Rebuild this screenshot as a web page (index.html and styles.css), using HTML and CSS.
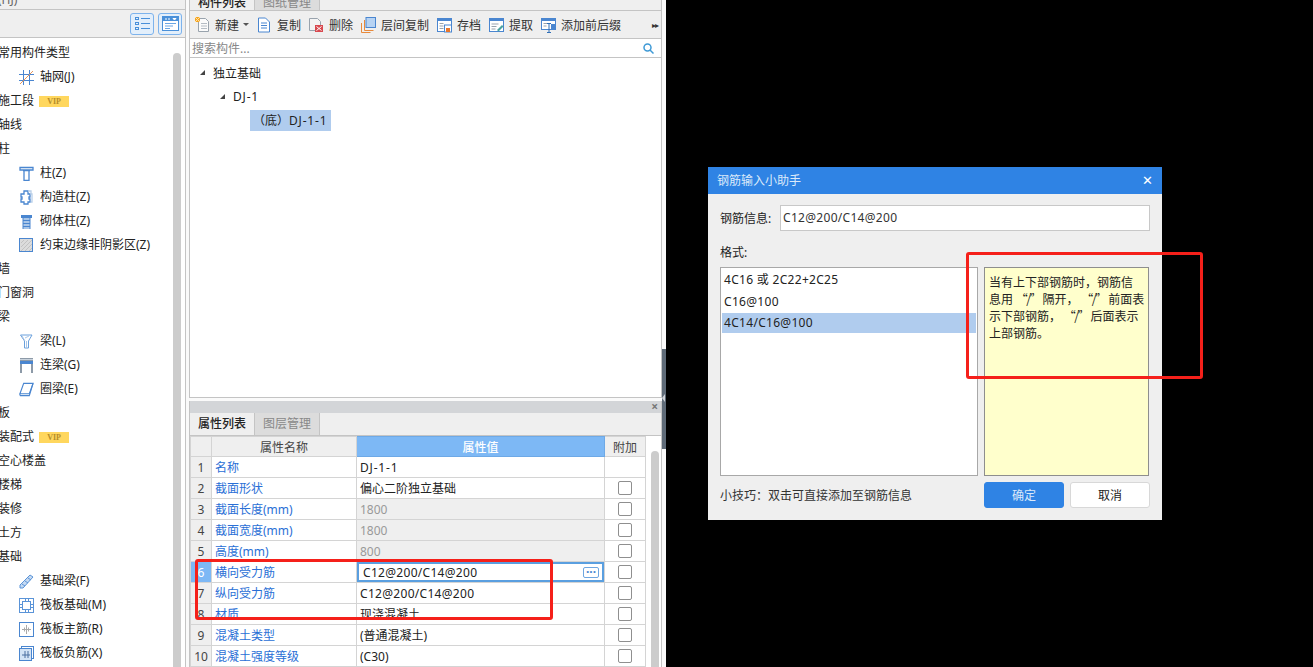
FILE: index.html
```html
<!DOCTYPE html>
<html lang="zh-CN">
<head>
    <meta charset="UTF-8">
    <title>钢筋输入小助手</title>
    <link rel="stylesheet" href="styles.css">
</head>
<body>
    <div class="app">
        <div class="sidebar">
            <div class="side-top">导航(HJ)</div>
            <div class="side-tools">
                <button class="tool-btn">
                    <svg width="17" height="15" viewBox="0 0 17 15" fill="none" stroke="#4a90d9"><rect x="1.5" y="1.5" width="3" height="2"/><rect x="1.5" y="6.5" width="3" height="2"/><rect x="1.5" y="11.5" width="3" height="2"/><path d="M7 2.5h9M7 7.5h9M7 12.5h9"/></svg>
                </button>
                <button class="tool-btn">
                    <svg width="17" height="15" viewBox="0 0 17 15"><rect x="0.5" y="0.5" width="16" height="14" fill="#fff" stroke="#4a90d9"/><rect x="1" y="1" width="15" height="4" fill="#4a90d9"/><path d="M3 3h2M6 3h2M11 2.5h3l-1.5 1.5z" stroke="#fff" fill="#fff"/><path d="M3 7.5h11M3 10h8M3 12.5h5" stroke="#6aa5e3"/></svg>
                </button>
            </div>
            <div class="side-body">
                <div class="side-list">
                    <div class="group">常用构件类型</div>
                    <div class="item"><svg class="icon" viewBox="0 0 15 15" fill="none" stroke="#4a86d0"><path d="M0 4.5h15M0 10.5h15M4.5 0v15M10.5 0v15"/><path d="M1 14L14 1" stroke="#e8965a"/></svg>轴网(J)</div>
                    <div class="group">施工段<span class="vip">VIP</span></div>
                    <div class="group">轴线</div>
                    <div class="group">柱</div>
                    <div class="item"><svg class="icon" viewBox="0 0 15 15" fill="none" stroke="#4a86d0"><path d="M1 1.5h13v2.500h-13zM4 4.500h7M5 4.500v10h5v-10" stroke-width="1.300"/></svg>柱(Z)</div>
                    <div class="item"><svg class="icon" viewBox="0 0 15 15" fill="none" stroke="#4a86d0" stroke-width="1.300"><path d="M5 1h4v3h2v3h-1v2h1v3h-2v2h-4v-2h-3v-3h1v-2h-1v-3h3z"/><path d="M9 1h3v3h1v8h-1" stroke="#b9cfe9"/></svg>构造柱(Z)</div>
                    <div class="item"><svg class="icon" viewBox="0 0 15 15"><rect x="2" y="1" width="11" height="3" fill="#4a86d0"/><rect x="4" y="4" width="7" height="11" fill="#a9c6e8"/><path d="M4 6.500h7M4 9.500h7M4 12.500h7M4 4v11M11 4v11" stroke="#4a86d0" fill="none"/></svg>砌体柱(Z)</div>
                    <div class="item"><svg class="icon" viewBox="0 0 15 15"><rect x="0.500" y="0.500" width="13" height="13" fill="#dcdcdc" stroke="#4a86d0"/><path d="M2 5L5 2M2 9L9 2M2 13L13 2M6 13L13 6M10 13L13 10" stroke="#c2c2c2"/></svg>约束边缘非阴影区(Z)</div>
                    <div class="group">墙</div>
                    <div class="group">门窗洞</div>
                    <div class="group">梁</div>
                    <div class="item"><svg class="icon" viewBox="0 0 15 15" fill="none" stroke="#6aa0dc"><path d="M1.500 1h11.500l-3.500 6v7h-4v-7z"/><path d="M3 2l3 5M7.500 7v7M6 4l4-2" stroke="#a9c6e8"/></svg>梁(L)</div>
                    <div class="item"><svg class="icon" viewBox="0 0 15 15"><rect x="1" y="0" width="13" height="15" fill="#8d9aa8"/><rect x="1" y="3" width="13" height="3" fill="#4a86d0"/><rect x="3" y="6" width="9" height="9" fill="#fff"/><rect x="1" y="1" width="13" height="1" fill="#c9d3dd"/></svg>连梁(G)</div>
                    <div class="item"><svg class="icon" viewBox="0 0 16 15" fill="none" stroke="#4a86d0" stroke-width="1.200"><path d="M5 1h10l-4 11h-10z"/><path d="M1 14h10l4-13M1 12v2" /></svg>圈梁(E)</div>
                    <div class="group">板</div>
                    <div class="group">装配式<span class="vip">VIP</span></div>
                    <div class="group">空心楼盖</div>
                    <div class="group">楼梯</div>
                    <div class="group">装修</div>
                    <div class="group">土方</div>
                    <div class="group">基础</div>
                    <div class="item"><svg class="icon" viewBox="0 0 15 15"><path d="M1 11L11 1l3 2L4 14H1z" fill="#c6daf2" stroke="#5a94d8"/><path d="M3 10l3 2M6 7l3 2M9 4l3 2" stroke="#5a94d8"/></svg>基础梁(F)</div>
                    <div class="item"><svg class="icon" viewBox="0 0 15 15" fill="none" stroke="#5a94d8"><rect x="0.500" y="0.500" width="14" height="14"/><rect x="3.500" y="3.500" width="8" height="8"/><path d="M1 6.500h2M1 9.500h2M12 6.500h2M12 9.500h2M6.500 1v2M9.500 1v2M6.500 12v2M9.500 12v2"/></svg>筏板基础(M)</div>
                    <div class="item"><svg class="icon" viewBox="0 0 15 15" fill="none"><rect x="0.500" y="0.500" width="14" height="14" stroke="#4a86d0"/><path d="M3 7.500h9M7.500 3v9M5.500 5.500v4M9.500 5.500v4" stroke="#aaa"/></svg>筏板主筋(R)</div>
                    <div class="item"><svg class="icon" viewBox="0 0 15 15"><rect x="2.500" y="0.500" width="12" height="12" fill="#fff" stroke="#4a86d0"/><rect x="0.500" y="2.500" width="12" height="12" fill="#d3e3f6" stroke="#4a86d0"/><path d="M3 9h8M6 5v7M9 5v7" stroke="#4a6fa0" fill="none"/></svg>筏板负筋(X)</div>
                </div>
                <div class="scroll side-scroll"></div>
            </div>
        </div>

        <div class="mid">
            <div class="panel-top">
                <div class="tabs tabs-cut">
                    <div class="tab active">构件列表</div>
                    <div class="tab">图纸管理</div>
                </div>
                <div class="toolbar">
                    <div class="tb-item"><svg class="icon" viewBox="0 0 15 16"><path d="M3.500 1.500h7l3 3v10h-10z" fill="#fbfbfb" stroke="#99a3ad"/><path d="M6 6.500h6M6 9h6M6 11.500h6" stroke="#b5bcc4"/><rect x="0" y="0" width="5" height="5" fill="#f5a623"/><path d="M0 0l5 5M5 0l-5 5" stroke="#fde2ad"/></svg>新建<span class="caret"></span></div>
                    <div class="tb-item"><svg class="icon" viewBox="0 0 15 16" fill="none" stroke="#4a86d0"><path d="M1.500 1h7l4 4v10h-11z" fill="#fff"/><path d="M4 6h6M4 8.500h6M4 11h6"/></svg>复制</div>
                    <div class="tb-item"><svg class="icon" viewBox="0 0 15 16"><path d="M0.500 1.500h8l3 3v9h-11z" fill="#f4f4f4" stroke="#99a3ad"/><rect x="6" y="8" width="8" height="7" fill="#d8494f"/><path d="M7.500 9.500l5 4M12.500 9.500l-5 4" stroke="#fff"/></svg>删除</div>
                    <div class="tb-item"><svg class="icon" viewBox="0 0 15 16"><rect x="5" y="0.500" width="9.500" height="10" fill="#b7d3f3" stroke="#4a86d0"/><path d="M3.500 3v10.500h9M0.500 6v9.500h9" fill="none" stroke="#e88a3c"/></svg>层间复制</div>
                    <div class="tb-item"><svg class="icon" viewBox="0 0 15 16"><rect x="0.500" y="1.500" width="14" height="13" fill="#fff" stroke="#4a86d0"/><rect x="0" y="1" width="15" height="3" fill="#4a86d0"/><path d="M2.500 6.500h4M2.500 9h4M2.500 11.500h4" stroke="#99a3ad"/><rect x="7.500" y="8" width="7" height="7" fill="#fff" stroke="#4a86d0"/><rect x="9" y="11" width="4" height="4" fill="#e8762c"/></svg>存档</div>
                    <div class="tb-item"><svg class="icon" viewBox="0 0 15 16"><rect x="0.500" y="1.500" width="14" height="13" fill="#fff" stroke="#4a86d0"/><rect x="0" y="1" width="15" height="3" fill="#4a86d0"/><path d="M2.500 7h7M2.500 9.500h5M2.500 12h4" stroke="#99a3ad"/><path d="M8 13l5-5 1.500 1.500-5 5z" fill="#4aa3a0"/></svg>提取</div>
                    <div class="tb-item"><svg class="icon" viewBox="0 0 15 16"><rect x="0.500" y="1.500" width="14" height="11" fill="#fff" stroke="#4a86d0"/><rect x="0" y="1" width="15" height="3" fill="#4a86d0"/><path d="M2.500 6.500h4M2.500 9h3" stroke="#99a3ad"/><rect x="10" y="7" width="5" height="5" fill="#4a86d0"/><path d="M6 6.500h4M8 6.500v9M6 15.500h4" stroke="#2f6fb8" fill="none"/></svg>添加前后缀</div>
                    <span class="more">▸▸</span>
                </div>
                <div class="search">
                    <span class="search-text">搜索构件...</span>
                    <svg width="11" height="11" viewBox="0 0 11 11" fill="none" stroke="#3f9ad6" stroke-width="1.500"><circle cx="4.500" cy="4.500" r="3.500"/><path d="M7 7l3.500 3.500"/></svg>
                </div>
                <div class="tree">
                    <div class="tree-row"><span class="arrow"></span>独立基础</div>
                    <div class="tree-row lv2"><span class="arrow"></span><span class="dj">DJ-1</span></div>
                    <div class="tree-row lv3"><span class="tree-sel">（底）<span class="dj">DJ-1-1</span></span></div>
                </div>
            </div>

            <div class="panel-bottom">
                <div class="panel-head"><span class="close-x">×</span></div>
                <div class="tabs tabs-prop">
                    <div class="tab active">属性列表</div>
                    <div class="tab">图层管理</div>
                </div>
                <div class="prop-wrap">
                    <table class="props">
                        <colgroup><col class="c-num"><col class="c-name"><col class="c-val"><col class="c-add"></colgroup>
                        <thead>
                            <tr><th></th><th>属性名称</th><th class="th-val">属性值</th><th>附加</th></tr>
                        </thead>
                        <tbody>
                            <tr><td class="num">1</td><td class="name">名称</td><td><span class="dj">DJ-1-1</span></td><td></td></tr>
                            <tr><td class="num">2</td><td class="name">截面形状</td><td>偏心二阶独立基础</td><td><span class="check"></span></td></tr>
                            <tr><td class="num">3</td><td class="name">截面长度(mm)</td><td class="off">1800</td><td><span class="check"></span></td></tr>
                            <tr><td class="num">4</td><td class="name">截面宽度(mm)</td><td class="off">1800</td><td><span class="check"></span></td></tr>
                            <tr><td class="num">5</td><td class="name">高度(mm)</td><td class="off">800</td><td><span class="check"></span></td></tr>
                            <tr class="cur"><td class="num">6</td><td class="name">横向受力筋</td><td class="edit"><div class="edit-in"><span class="lat">C12@200/C14@200</span><span class="dots">···</span></div></td><td><span class="check"></span></td></tr>
                            <tr><td class="num">7</td><td class="name">纵向受力筋</td><td class="lat">C12@200/C14@200</td><td><span class="check"></span></td></tr>
                            <tr><td class="num">8</td><td class="name">材质</td><td>现浇混凝土</td><td><span class="check"></span></td></tr>
                            <tr><td class="num">9</td><td class="name">混凝土类型</td><td>(普通混凝土)</td><td><span class="check"></span></td></tr>
                            <tr><td class="num">10</td><td class="name">混凝土强度等级</td><td>(C30)</td><td><span class="check"></span></td></tr>
                        </tbody>
                    </table>
                    <div class="scroll prop-scroll"></div>
                </div>
            </div>
        </div>
        <div class="drag-bar"></div>
    </div>

    <div class="stage">
        <div class="dialog">
            <div class="dlg-title">钢筋输入小助手<span class="dlg-close">✕</span></div>
            <div class="dlg-body">
                <div class="dlg-info">
                    <span>钢筋信息:</span>
                    <div class="dlg-input lat">C12@200/C14@200</div>
                </div>
                <div class="dlg-label">格式:</div>
                <div class="dlg-main">
                    <div class="fmt-list">
                        <div class="fmt lat">4C16 或 2C22+2C25</div>
                        <div class="fmt lat">C16@100</div>
                        <div class="fmt sel lat">4C14/C16@100</div>
                    </div>
                    <div class="fmt-note">当有上下部钢筋时，钢筋信<br>息用 <span class="q">“/”</span> 隔开， <span class="q">“/”</span> 前面表<br>示下部钢筋， <span class="q">“/”</span> 后面表示<br>上部钢筋。</div>
                </div>
                <div class="dlg-foot">
                    <span class="tip">小技巧：双击可直接添加至钢筋信息</span>
                    <button class="btn primary">确定</button>
                    <button class="btn">取消</button>
                </div>
            </div>
        </div>
    </div>

    <div class="mark mark-table"></div>
    <div class="mark mark-note"></div>
</body>
</html>
```

FILE: styles.css
```css
*{
    margin: 0;
    padding: 0;
    box-sizing: border-box;
}
body{
    font-family: "Noto Sans", "Noto Sans CJK SC", sans-serif;
    font-size: 12px;
    color: #222;
    width: 1313px;
    height: 667px;
    overflow: hidden;
    background-color: #000;
    display: flex;
    position: relative;
}
.lat{
    letter-spacing: 0.3px;
}
.dj{
    letter-spacing: 0.8px;
}

.app{
    position: relative;
    width: 666px;
    height: 667px;
    background-color: #fafafa;
    display: flex;
    flex-shrink: 0;
    overflow: hidden;
}

/* left tree */
.sidebar{
    width: 186px;
    height: 667px;
    background-color: #fff;
    border-right: 1px solid #c4c4c4;
    display: flex;
    flex-direction: column;
}
.side-top{
    height: 10px;
    line-height: 0;
    margin-left: -26px;
    background-color: #efefef;
    border-bottom: 1px solid #c4c4c4;
    color: #666;
    overflow: hidden;
}
.side-tools{
    height: 28px;
    background-color: #efefef;
    border-bottom: 1px solid #c4c4c4;
    display: flex;
    justify-content: flex-end;
    align-items: center;
    gap: 4px;
    padding-right: 3px;
}
.tool-btn{
    width: 24px;
    height: 22px;
    border: 1px solid #7db3ec;
    border-radius: 3px;
    background-color: #e3effb;
    display: flex;
    align-items: center;
    justify-content: center;
}
.side-body{
    flex: 1;
    display: flex;
    overflow: hidden;
}
.side-list{
    width: 173px;
    padding-top: 3px;
    overflow: hidden;
}
.group, .item{
    height: 24px;
    line-height: 24px;
    white-space: nowrap;
    display: flex;
    align-items: center;
}
.group{
    margin-left: -2px;
}
.item{
    padding-left: 19px;
}
.icon{
    width: 15px;
    height: 15px;
    margin-right: 6px;
    flex-shrink: 0;
}
.vip{
    width: 30px;
    height: 11px;
    line-height: 11px;
    margin-left: 5px;
    background-color: #ffd75e;
    color: #b58c2a;
    font-family: "Liberation Serif", serif;
    font-size: 8px;
    font-weight: bold;
    text-align: center;
}
.scroll{
    width: 8px;
    background-color: #ccc;
    border-radius: 4px 4px 0 0;
}
.side-scroll{
    margin-top: 15px;
}

/* middle column */
.mid{
    width: 473px;
    margin-left: 3px;
    display: flex;
    flex-direction: column;
}
.panel-top{
    height: 398px;
    display: flex;
    flex-direction: column;
    border: 1px solid #c4c4c4;
    border-top: 0;
    background-color: #fff;
}
.tabs{
    height: 24px;
    background-color: #efefef;
    display: flex;
    border-bottom: 1px solid #c4c4c4;
}
.tabs-prop{
    height: 23px;
}
.tab{
    width: 65px;
    line-height: 22px;
    text-align: center;
    color: #888;
    background-color: #dcdcdc;
    border-right: 1px solid #c4c4c4;
}
.tab.active{
    color: #222;
    background-color: #efefef;
    font-weight: 500;
}
.tabs-cut{
    height: 11px;
    overflow: hidden;
}
.tabs-cut .tab{
    line-height: 6px;
}
.toolbar{
    height: 28px;
    background-color: #efefef;
    border-bottom: 1px solid #c4c4c4;
    display: flex;
    align-items: center;
    gap: 8px;
    padding-left: 5px;
    position: relative;
}
.tb-item{
    display: flex;
    align-items: center;
    color: #333;
    white-space: nowrap;
}
.tb-item .icon{
    height: 16px;
    margin-right: 5px;
}
.caret{
    width: 0;
    height: 0;
    margin-left: 4px;
    border-left: 3px solid transparent;
    border-right: 3px solid transparent;
    border-top: 3px solid #555;
}
.more{
    margin-left: auto;
    margin-right: 3px;
    font-size: 8px;
    letter-spacing: -1px;
    color: #333;
}
.search{
    height: 19px;
    border-bottom: 1px solid #c4c4c4;
    display: flex;
    align-items: center;
    justify-content: space-between;
    padding: 0 7px 0 2px;
}
.search-text{
    color: #888;
}
.tree{
    flex: 1;
    padding-top: 3px;
}
.tree-row{
    height: 23.5px;
    display: flex;
    align-items: center;
    padding-left: 10px;
}
.lv2{
    padding-left: 30px;
}
.lv3{
    padding-left: 60px;
    margin-top: 1px;
}
.arrow{
    width: 0;
    height: 0;
    margin-right: 8px;
    border-left: 5px solid transparent;
    border-bottom: 5px solid #444;
}
.tree-sel{
    width: 81px;
    height: 21px;
    line-height: 21px;
    background-color: #b0ccee;
    white-space: nowrap;
    text-indent: 3px;
}

.panel-bottom{
    margin-top: 3px;
    flex: 1;
    display: flex;
    flex-direction: column;
    overflow: hidden;
    border-right: 1px solid #c4c4c4;
    border-left: 1px solid #c4c4c4;
    background-color: #fff;
}
.panel-head{
    height: 12px;
    background-color: #d3d5d8;
    text-align: right;
    line-height: 11px;
    padding-right: 3px;
    color: #777;
    font-size: 12px;
    font-weight: bold;
}
.prop-wrap{
    flex: 1;
    display: flex;
    overflow: hidden;
}
.props{
    width: 455px;
    table-layout: fixed;
    border-collapse: collapse;
    flex-shrink: 0;
    align-self: flex-start;
}
.c-num{ width: 21px; }
.c-name{ width: 145px; }
.c-val{ width: 248px; }
.c-add{ width: 41px; }
.props th, .props td{
    height: 21px;
    border: 1px solid #d4d4d4;
    padding: 0 3px;
    font-weight: normal;
    white-space: nowrap;
    overflow: hidden;
}
.props th{
    height: 20px;
    background-color: #efefef;
    color: #444;
    text-align: center;
}
.props th.th-val{
    background-color: #7db8f5;
    border-color: #6ea9e6;
    color: #fff;
    font-weight: 500;
}
.props td.num{
    background-color: #efefef;
    color: #444;
    text-align: center;
    padding: 0;
}
.props td.name{
    color: #2a6fd6;
    padding-left: 3px;
}
.props td:last-child{
    text-align: center;
}
.props td.off{
    background-color: #efefef;
    color: #999;
}
.check{
    display: block;
    width: 14px;
    height: 14px;
    margin: 0 auto;
    border: 1px solid #8f8f8f;
    border-radius: 2px;
    background-color: #fff;
}
.cur td.num{
    background-color: #7db8f5;
    color: #fff;
}
.props td.edit{
    padding: 0;
}
.edit-in{
    height: 20px;
    line-height: 17px;
    border: 2px solid #5a9fe0;
    padding: 0 3px 0 4px;
    display: flex;
    align-items: center;
    justify-content: space-between;
}
.dots{
    width: 16px;
    height: 11px;
    line-height: 8px;
    border: 1px solid #6fa6e0;
    border-radius: 2px;
    color: #4a86d0;
    text-align: center;
    font-weight: bold;
}
.prop-scroll{
    margin: 15px 0 0 5px;
}
.drag-bar{
    position: absolute;
    left: 662px;
    top: 349px;
    width: 4px;
    height: 100px;
    background-color: #5f6b78;
}
.drag-bar::after{
    content: "";
    position: absolute;
    left: 0;
    top: 45px;
    border-top: 4px solid transparent;
    border-bottom: 4px solid transparent;
    border-right: 3px solid #cfd3d8;
}

/* dialog */
.stage{
    flex: 1;
    padding: 167px 0 0 42px;
}
.dialog{
    width: 454px;
    height: 353px;
    background-color: #efefef;
}
.dlg-title{
    height: 27px;
    line-height: 27px;
    padding: 0 9px;
    background-color: #2f83e4;
    color: #dbe9fa;
    display: flex;
    justify-content: space-between;
}
.dlg-close{
    color: #fff;
    font-family: "DejaVu Sans", sans-serif;
    font-size: 13px;
    font-weight: bold;
}
.dlg-body{
    padding: 11px 12px 0;
}
.dlg-info{
    display: flex;
    align-items: center;
    justify-content: space-between;
}
.dlg-input{
    width: 370px;
    height: 26px;
    line-height: 24px;
    padding-left: 2px;
    background-color: #fff;
    border: 1px solid #c8c8c8;
    color: #333;
}
.dlg-label{
    height: 36px;
    line-height: 44px;
}
.dlg-main{
    display: flex;
    gap: 6px;
}
.fmt-list{
    width: 258px;
    height: 209px;
    background-color: #fff;
    border: 1px solid #a8a8a8;
    padding: 1px;
}
.fmt{
    height: 22px;
    line-height: 22px;
    padding-left: 2px;
}
.fmt.sel{
    height: 20px;
    line-height: 20px;
    background-color: #b0ccee;
}
.fmt-note{
    width: 165px;
    height: 209px;
    background-color: #ffffcc;
    border: 1px solid #8e8e8e;
    padding: 5px 0 0 4px;
    font-family: "Noto Sans CJK SC", sans-serif;
    line-height: 17px;
    white-space: nowrap;
}
.q{
    letter-spacing: -1.5px;
}
.dlg-foot{
    display: flex;
    align-items: center;
    margin-top: 6px;
    gap: 6px;
}
.tip{
    width: 258px;
    color: #333;
}
.btn{
    width: 80px;
    height: 26px;
    font: inherit;
    color: #222;
    background-color: #fff;
    border: 1px solid #d8d8d8;
    border-radius: 3px;
}
.btn.primary{
    color: #dbe9fa;
    background-color: #2f83e4;
    border-color: #2f83e4;
}

/* red notes drawn over the screenshot */
.mark{
    position: absolute;
    border: 3px solid #f5201a;
    border-radius: 3px;
}
.mark-table{
    left: 195px;
    top: 559px;
    width: 358px;
    height: 61px;
}
.mark-note{
    left: 966px;
    top: 252px;
    width: 237px;
    height: 127px;
}
```
